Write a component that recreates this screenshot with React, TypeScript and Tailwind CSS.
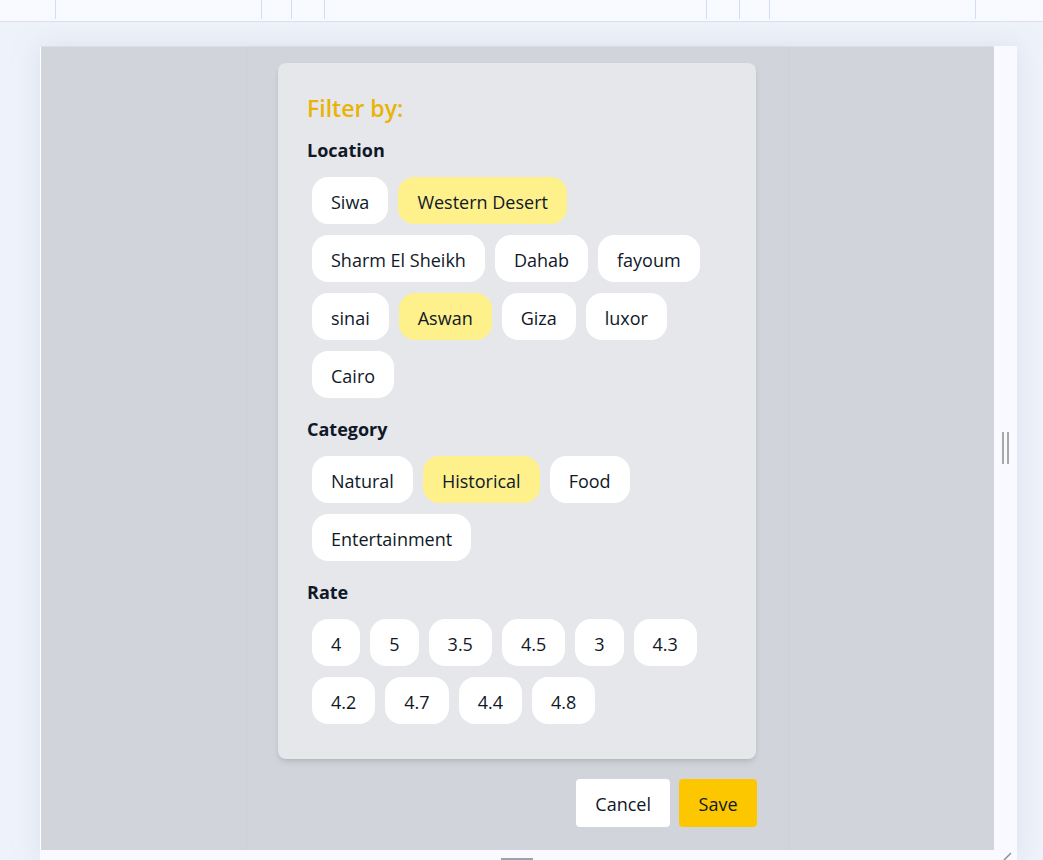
import React from 'react';

const locations = ['Siwa', 'Western Desert', 'Sharm El Sheikh', 'Dahab', 'fayoum', 'sinai', 'Aswan', 'Giza', 'luxor', 'Cairo'];
const categories = ['Natural', 'Historical', 'Food', 'Entertainment'];
const rates = ['4', '5', '3.5', '4.5', '3', '4.3', '4.2', '4.7', '4.4', '4.8'];

const topCells = [56, 206, 30, 33, 382, 33, 30, 206];

function Chip({ label, active }: { label: string; active: boolean }) {
    return (
        <button
            className={`mx-[5px] my-[5.5px] h-[47px] px-[19px] pt-[3px] rounded-2xl text-lg text-gray-900 flex items-center ${active ? 'bg-[#fef08a]' : 'bg-white'}`}
        >
            {label}
        </button>
    );
}

function Section({ title, items, selected, className }: { title: string; items: string[]; selected: string[]; className: string }) {
    return (
        <div className={className}>
            <h4 className="text-lg leading-7 font-bold text-gray-900">{title}</h4>
            <div className="mt-[7.5px] flex flex-wrap">
                {items.map(item => (
                    <Chip key={item} label={item} active={selected.includes(item)} />
                ))}
            </div>
        </div>
    );
}

export default function App() {
    const [selected, setSelected] = React.useState<string[]>(['Western Desert', 'Aswan', 'Historical']);

    return (
        <div
            className="w-full h-[860px] overflow-hidden bg-[#eef2fa] relative"
            style={{ fontFamily: '"Open Sans", "Noto Sans", sans-serif' }}
        >
            {/* top toolbar strip */}
            <div className="h-[22px] bg-[#f8faff] border-b border-[#d7e1f4] flex">
                {topCells.map((w, i) => (
                    <div key={i} className="h-[19px] border-r border-[#d3def3]" style={{ width: w }} />
                ))}
            </div>

            {/* preview frame */}
            <div className="mt-[24px] ml-[40px] w-[977px] shadow-[0_0_24px_rgba(180,190,215,0.35)]">
                <div className="flex h-[804px]">
                    <div className="w-[954px] border-l border-white border-t border-t-[#dcdfe5] bg-[#d1d5db] flex justify-center">
                        <div className="w-[540px] h-full bg-[#d1d5db] shadow-[0_0_3px_rgba(0,0,0,0.04)] pt-[16px] flex flex-col items-center">
                            <div className="w-[478px] -ml-[1px]">
                                <div className="bg-[#e5e7eb] rounded-lg shadow-md p-[29px]">
                                    <h3 className="text-[23px] leading-8 font-semibold text-[#eab308]">Filter by:</h3>
                                    <Section className="mt-3" title="Location" items={locations} selected={selected} />
                                    <Section className="mt-[11px]" title="Category" items={categories} selected={selected} />
                                    <Section className="mt-[12px]" title="Rate" items={rates} selected={selected} />
                                </div>
                                <div className="mt-[20px] -mr-[1px] flex justify-end gap-[9px]">
                                    <button
                                        className="h-12 px-[19px] pt-[2px] rounded bg-white text-lg text-gray-900"
                                        onClick={() => setSelected([])}
                                    >
                                        Cancel
                                    </button>
                                    <button className="h-12 px-[19.5px] pt-[2px] rounded bg-[#fdc700] text-lg text-gray-900">
                                        Save
                                    </button>
                                </div>
                            </div>
                        </div>
                    </div>
                    <div className="w-[23px] bg-[#f8faff] flex items-center justify-center gap-[3px]">
                        <div className="w-[2px] h-[32px] bg-[#a8a8a8]" />
                        <div className="w-[2px] h-[32px] bg-[#a8a8a8]" />
                    </div>
                </div>
                <div className="h-[10px] bg-[#f8faff] relative">
                    <div className="absolute left-[461px] bottom-0 w-[32px] h-[2px] bg-[#9ea3ab]" />
                    <svg className="absolute right-[4px] bottom-0" width="10" height="8" viewBox="0 0 10 8">
                        <path d="M1 8 L8 1" stroke="#8a8f98" strokeWidth="1.5" />
                    </svg>
                </div>
            </div>
        </div>
    );
}
